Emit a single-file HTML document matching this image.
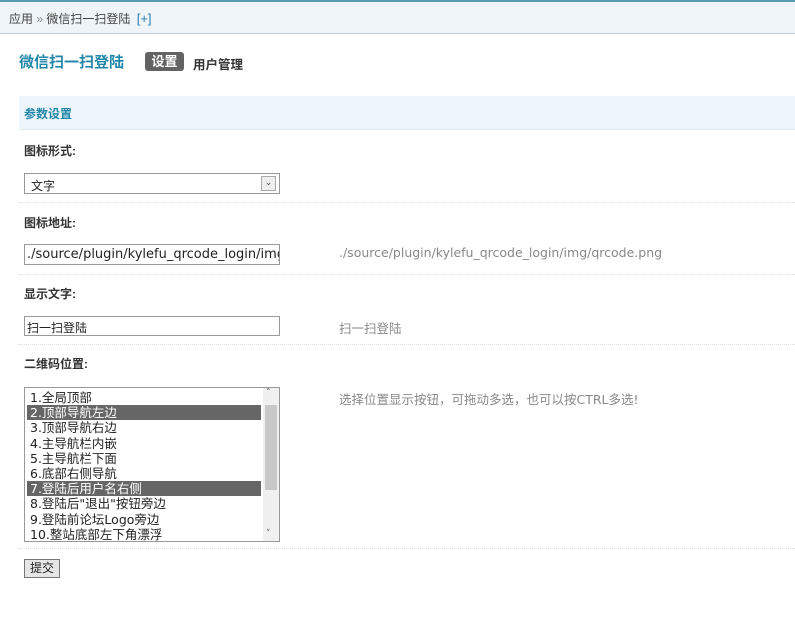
<!DOCTYPE html>
<html><head><meta charset="utf-8"><style>
*{margin:0;padding:0;box-sizing:border-box}
body{width:795px;height:619px;background:#fff;position:relative;overflow:hidden;font-family:"Liberation Sans","Noto Sans CJK SC",sans-serif;font-size:12px;color:#333}
.a{position:absolute;white-space:nowrap}
.top{left:0;top:0;width:795px;height:34px;background:#eef4f8;border-top:2px solid #5a9bb3;border-bottom:1px solid #b9cfdb}
.lbl{font-weight:bold;color:#333;font-size:12px}
.line{left:19px;width:776px;height:0;border-top:1px dotted #d8dde0}
.box{border:1px solid #999;background:#fff;font-family:"DejaVu Sans","Noto Sans CJK SC",sans-serif;font-size:12px;color:#222}
.tip{color:#888;font-family:"DejaVu Sans","Noto Sans CJK SC",sans-serif;font-size:12.5px}
.li{height:15.2px;line-height:15px;padding-left:3px;width:234px}
.sel{background:#666;color:#fff}
</style></head><body>
<div class="a top"></div>
<div class="a" style="left:9px;top:10px;color:#444;font-size:12px">应用 <span style="color:#888">»</span> 微信扫一扫登陆 <span style="color:#2a7db0;margin-left:3px;font-size:13px">[+]</span></div>
<div class="a" style="left:19px;top:51px;color:#2287a8;font-weight:bold;font-size:15px">微信扫一扫登陆</div>
<div class="a" style="left:145px;top:52px;width:39px;height:19px;background:#636363;border-radius:3px;color:#fff;font-weight:bold;text-align:center;line-height:19px;font-size:13px">设置</div>
<div class="a" style="left:193px;top:54px;font-weight:bold;color:#333;font-size:12.5px">用户管理</div>
<div class="a" style="left:19px;top:96px;width:776px;height:34px;background:#eef5fa;border-bottom:1px solid #e3ebf0"></div>
<div class="a" style="left:24px;top:105px;color:#2287a8;font-weight:bold">参数设置</div>
<div class="a lbl" style="left:24px;top:142px">图标形式:</div>
<div class="a box" style="left:24px;top:173px;width:256px;height:21px;padding:3px 0 0 6px">文字<div class="a" style="right:3px;top:2px;width:15px;height:15px;border:1px solid #aaa;background:#eee;font-size:9px;text-align:center;line-height:13px;color:#444">⌄</div></div>
<div class="a line" style="top:202px"></div>
<div class="a lbl" style="left:24px;top:214px">图标地址:</div>
<div class="a box" style="left:24px;top:244px;width:256px;height:21px;padding:2px 0 0 2px;overflow:hidden;font-size:13px">./source/plugin/kylefu_qrcode_login/img</div>
<div class="a tip" style="left:339px;top:245px">./source/plugin/kylefu_qrcode_login/img/qrcode.png</div>
<div class="a line" style="top:274px"></div>
<div class="a lbl" style="left:24px;top:285px">显示文字:</div>
<div class="a box" style="left:24px;top:316px;width:256px;height:20px;padding:2px 0 0 2px">扫一扫登陆</div>
<div class="a tip" style="left:339px;top:318px">扫一扫登陆</div>
<div class="a line" style="top:344px"></div>
<div class="a lbl" style="left:24px;top:355px">二维码位置:</div>
<div class="a box" style="left:24px;top:387px;width:256px;height:155px;padding-top:2px;padding-left:2px;overflow:hidden;font-size:12.5px">
<div class="li">1.全局顶部</div><div class="li sel">2.顶部导航左边</div><div class="li">3.顶部导航右边</div><div class="li">4.主导航栏内嵌</div><div class="li">5.主导航栏下面</div><div class="li">6.底部右侧导航</div><div class="li sel">7.登陆后用户名右侧</div><div class="li">8.登陆后"退出"按钮旁边</div><div class="li">9.登陆前论坛Logo旁边</div><div class="li">10.整站底部左下角漂浮</div>
<div class="a" style="right:0;top:0;width:16px;height:153px;background:#f0f0f0"><div class="a" style="left:2px;top:17px;width:12px;height:85px;background:#c8c8c8"></div><div class="a" style="left:3px;top:0;font-size:9px;color:#555">˄</div><div class="a" style="left:3px;bottom:2px;font-size:9px;color:#555">˅</div></div>
</div>
<div class="a tip" style="left:339px;top:389px">选择位置显示按钮，可拖动多选，也可以按CTRL多选!</div>
<div class="a line" style="top:548px"></div>
<div class="a" style="left:24px;top:559px;width:36px;height:19px;border:1px solid #777;background:#e6e6e6;text-align:center;line-height:17px;color:#222">提交</div>
</body></html>
